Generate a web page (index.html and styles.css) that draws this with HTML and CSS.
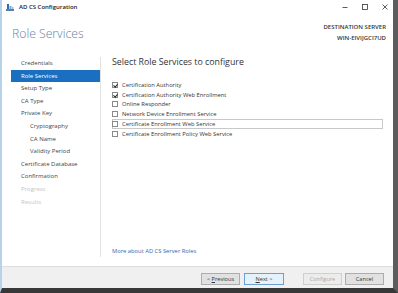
FILE: index.html
```html
<!DOCTYPE html>
<html>
<head>
<meta charset="utf-8">
<link rel="stylesheet" href="styles.css">
</head>
<body>
<div class="window">
  <div class="titlebar">
    <svg class="appicon" width="8" height="8" viewBox="0 0 8 8">
      <rect x="0" y="6" width="8" height="2" fill="#5b7fa6"/>
      <rect x="1" y="1" width="2" height="5" fill="#2f6db3"/>
      <rect x="3.5" y="3" width="2" height="3" fill="#7aa7d6"/>
      <rect x="6" y="4" width="1.5" height="2" fill="#9bbbe0"/>
    </svg>
    <span class="title">AD CS Configuration</span>
    <div class="controls">
      <svg width="8" height="8" viewBox="0 0 8 8"><line x1="1.5" y1="4.5" x2="6.5" y2="4.5" stroke="#333" stroke-width="0.8"/></svg>
      <svg width="8" height="8" viewBox="0 0 8 8"><rect x="1.5" y="1.5" width="5" height="5" fill="none" stroke="#333" stroke-width="0.8"/></svg>
      <svg width="8" height="8" viewBox="0 0 8 8"><path d="M1.5 1.5L6.5 6.5M6.5 1.5L1.5 6.5" stroke="#333" stroke-width="0.8"/></svg>
    </div>
  </div>
  <div class="header">
    <h1 class="page-title">Role Services</h1>
    <div class="dest">
      <div>DESTINATION SERVER</div>
      <div>WIN-EIVIJGCI7UD</div>
    </div>
  </div>
  <div class="main">
    <nav class="nav">
      <div class="nav-item">Credentials</div>
      <div class="nav-item selected">Role Services</div>
      <div class="nav-item">Setup Type</div>
      <div class="nav-item">CA Type</div>
      <div class="nav-item">Private Key</div>
      <div class="nav-item sub">Cryptography</div>
      <div class="nav-item sub">CA Name</div>
      <div class="nav-item sub">Validity Period</div>
      <div class="nav-item">Certificate Database</div>
      <div class="nav-item">Confirmation</div>
      <div class="nav-item disabled">Progress</div>
      <div class="nav-item disabled">Results</div>
    </nav>
    <div class="content">
      <h2 class="section-title">Select Role Services to configure</h2>
      <div class="options">
        <div class="option"><span class="box checked"></span>Certification Authority</div>
        <div class="option"><span class="box checked"></span>Certification Authority Web Enrollment</div>
        <div class="option"><span class="box"></span>Online Responder</div>
        <div class="option"><span class="box"></span>Network Device Enrollment Service</div>
        <div class="option focused"><span class="box"></span>Certificate Enrollment Web Service</div>
        <div class="option"><span class="box"></span>Certificate Enrollment Policy Web Service</div>
      </div>
      <a class="more-link">More about AD CS Server Roles</a>
    </div>
  </div>
  <div class="footer">
    <button class="btn">&lt; <u>P</u>revious</button>
    <button class="btn default"><u>N</u>ext &gt;</button>
    <button class="btn disabled gap">Configure</button>
    <button class="btn">Cancel</button>
  </div>
</div>
</body>
</html>
```

FILE: styles.css
```css
* { box-sizing: border-box; margin: 0; padding: 0; }
html, body { width: 398px; height: 293px; overflow: hidden; background: #3c3c3c; }
body { font-family: "Open Sans", "Noto Sans", sans-serif; color: #222; }

.window {
  width: 398px;
  height: 293px;
  background: #ffffff;
  border-left: 2px solid #b7d3ea;
  border-right: 5px solid #5c5c5c;
  border-bottom: 5px solid #383838;
  display: flex;
  flex-direction: column;
}

.titlebar {
  height: 14px;
  display: flex;
  align-items: center;
  padding-left: 4px;
}
.appicon { margin-right: 5px; }
.title { font-size: 6px; font-weight: 600; color: #222; }
.controls {
  margin-left: auto;
  display: flex;
  gap: 12px;
  padding-right: 4px;
  align-items: center;
}

.header {
  height: 43px;
  display: flex;
  justify-content: space-between;
  align-items: flex-start;
  padding: 7px 7px 0 10px;
}
.page-title {
  font-size: 12.2px;
  font-weight: 300;
  color: #5d86a6;
  line-height: 20px;
  margin-top: 3px;
}
.dest {
  text-align: right;
  font-size: 6px;
  font-weight: 600;
  color: #333;
  line-height: 11px;
  margin-top: 1px;
}

.main {
  flex: 1;
  display: flex;
  min-height: 0;
}
.nav {
  width: 99px;
  border-right: 1px solid #e2e2e2;
  margin-bottom: 9px;
  padding-left: 9px;
  flex-shrink: 0;
}
.nav-item {
  height: 12.6px;
  line-height: 12.6px;
  font-size: 6px;
  color: #444;
  padding-left: 10px;
  white-space: nowrap;
}
.nav-item.sub { padding-left: 19px; }
.nav-item.selected { background: #1a6fc0; color: #fff; }
.nav-item.disabled { color: #c4c4c4; }

.content {
  flex: 1;
  display: flex;
  flex-direction: column;
  padding-left: 11px;
  padding-right: 10px;
}
.section-title {
  font-size: 8.8px;
  font-weight: 400;
  color: #333;
  line-height: 12px;
  margin-top: -1px;
}
.options { margin-top: 12px; }
.option {
  height: 9.8px;
  display: flex;
  align-items: center;
  font-size: 5.8px;
  color: #333;
  white-space: nowrap;
}
.option.focused { outline: 1px solid #c8c8c8; outline-offset: -1px; }
.box {
  width: 6px;
  height: 6px;
  border: 1px solid #8a8a8a;
  background: #fff;
  margin-right: 4px;
  position: relative;
  flex-shrink: 0;
}
.box.checked::after {
  content: "";
  position: absolute;
  left: 1.1px;
  top: -0.2px;
  width: 1.6px;
  height: 3.2px;
  border: solid #222;
  border-width: 0 1px 1px 0;
  transform: rotate(40deg);
}
.more-link {
  margin-top: auto;
  margin-bottom: 11px;
  font-size: 5.8px;
  color: #3568a8;
  line-height: 8px;
}

.footer {
  height: 22px;
  background: #f0f0f0;
  border-top: 1px solid #dedede;
  display: flex;
  align-items: center;
  justify-content: flex-end;
  padding-right: 9px;
  gap: 3px;
  padding-top: 2px;
}
.btn {
  width: 39px;
  height: 12px;
  font-family: "Open Sans", "Noto Sans", sans-serif;
  font-size: 5.6px;
  color: #333;
  background: #e1e1e1;
  border: 1px solid #adadad;
}
.btn.default { border-color: #6b9fd6; background: #e5f1fb; margin-left: 1px; width: 40px; }
.btn.disabled { color: #a8a8a8; border-color: #cfcfcf; background: #ececec; }
.btn.gap { margin-left: 16px; }
```
